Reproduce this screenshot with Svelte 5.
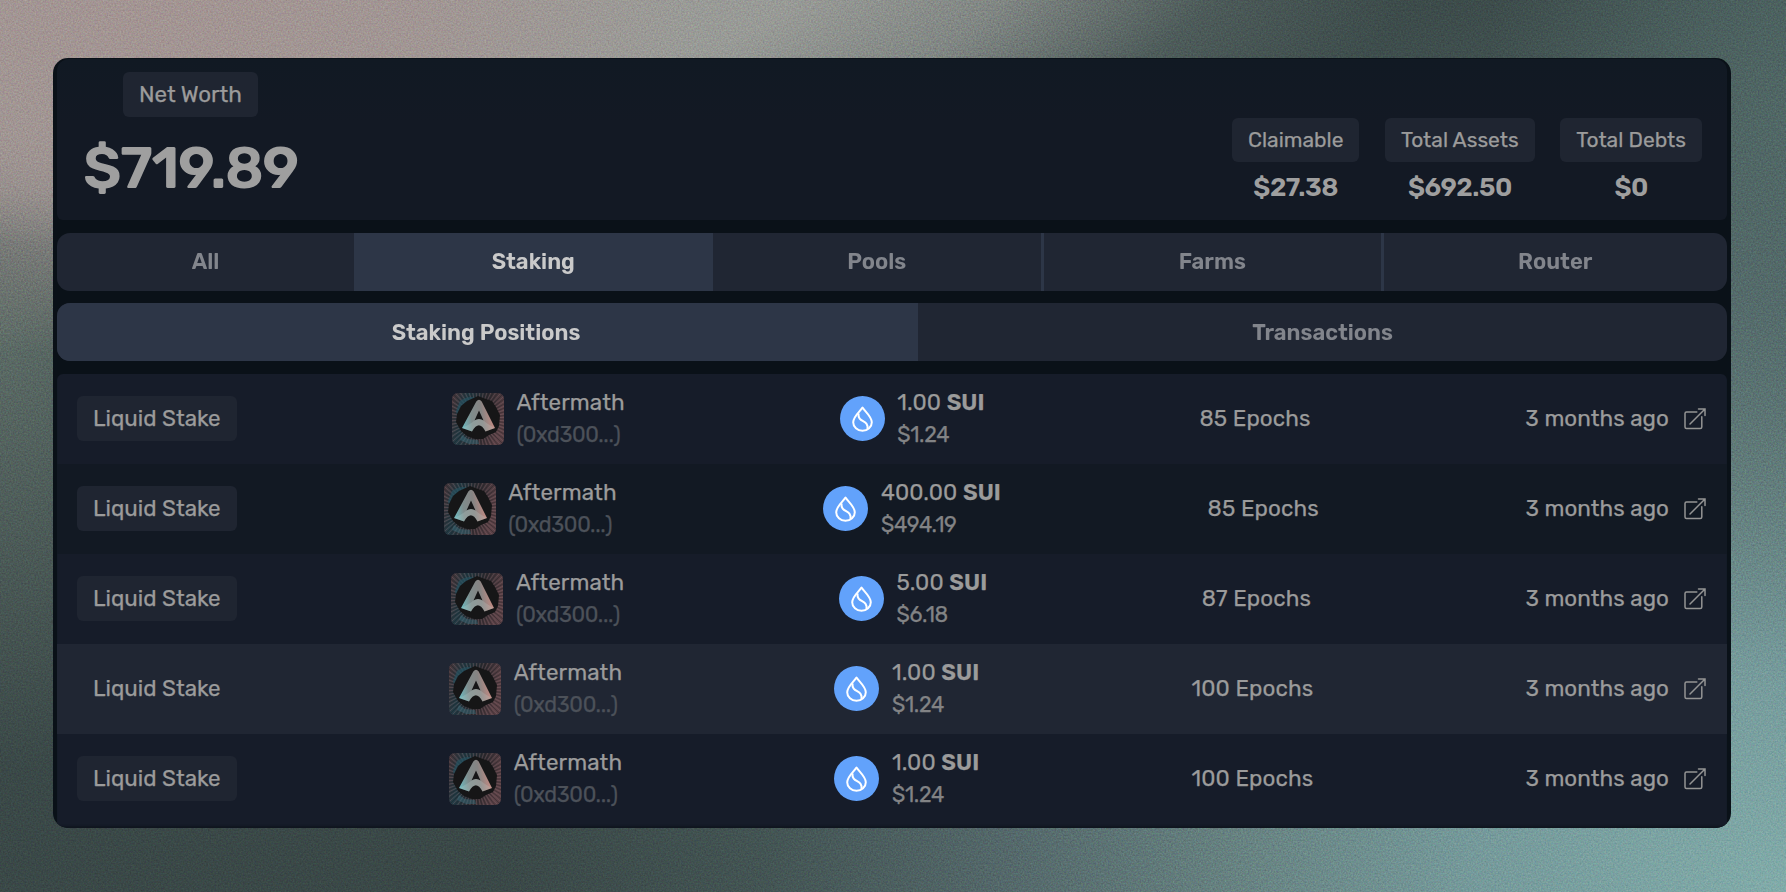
<script>
  const tabs = [
    { label: 'All' },
    { label: 'Staking', active: true },
    { label: 'Pools', line: true },
    { label: 'Farms', line: true },
    { label: 'Router' }
  ];
  const subtabs = [
    { label: 'Staking Positions', active: true },
    { label: 'Transactions' }
  ];
  const totals = [
    { label: 'Claimable', value: '$27.38' },
    { label: 'Total Assets', value: '$692.50' },
    { label: 'Total Debts', value: '$0' }
  ];
  const rows = [
    { amount: '1.00', usd: '$1.24', epochs: 85 },
    { amount: '400.00', usd: '$494.19', epochs: 85 },
    { amount: '5.00', usd: '$6.18', epochs: 87 },
    { amount: '1.00', usd: '$1.24', epochs: 100, hover: true },
    { amount: '1.00', usd: '$1.24', epochs: 100 }
  ];
  const rays = Array.from({ length: 96 }, (_, i) => {
    const a = (i * Math.PI) / 48;
    return { x: 26 + Math.cos(a) * 40, y: 26 + Math.sin(a) * 40 };
  });
</script>

<svg class="defs" width="0" height="0" aria-hidden="true">
  <defs>
    <linearGradient id="mark" gradientUnits="userSpaceOnUse" x1="12" y1="38" x2="42" y2="34">
      <stop offset="0" stop-color="#6fb4b9" />
      <stop offset="0.3" stop-color="#7f8c8c" />
      <stop offset="0.65" stop-color="#868483" />
      <stop offset="1" stop-color="#c08a82" />
    </linearGradient>
    <linearGradient id="tile" x1="0" y1="0" x2="1" y2="0.25">
      <stop offset="0" stop-color="#4a3539" />
      <stop offset="0.3" stop-color="#213c46" />
      <stop offset="0.65" stop-color="#2d2b30" />
      <stop offset="1" stop-color="#5a4146" />
    </linearGradient>
  </defs>
</svg>

<main>
  <svg class="grain" aria-hidden="true">
    <filter id="noise" color-interpolation-filters="sRGB">
      <feTurbulence type="fractalNoise" baseFrequency="0.6" numOctaves="2" seed="4" />
      <feColorMatrix type="saturate" values="0.6" />
      <feComponentTransfer>
        <feFuncR type="linear" slope="1.6" intercept="-0.3" />
        <feFuncG type="linear" slope="1.6" intercept="-0.3" />
        <feFuncB type="linear" slope="1.6" intercept="-0.3" />
        <feFuncA type="linear" slope="0" intercept="1" />
      </feComponentTransfer>
    </filter>
    <rect width="100%" height="100%" filter="url(#noise)" />
  </svg>

  <section class="panel">
    <header>
      <div class="worth">
        <span class="pill">Net Worth</span>
        <strong>$719.89</strong>
      </div>
      <div class="totals">
        {#each totals as t}
          <div class="total">
            <span class="pill">{t.label}</span>
            <b>{t.value}</b>
          </div>
        {/each}
      </div>
    </header>

    <nav class="tabs main-tabs">
      {#each tabs as t}
        <button class:active={t.active} class:line={t.line}>{t.label}</button>
      {/each}
    </nav>

    <nav class="tabs sub-tabs">
      {#each subtabs as t}
        <button class:active={t.active}>{t.label}</button>
      {/each}
    </nav>

    <div class="table">
      {#each rows as r}
        <div class="row" class:hover={r.hover}>
          <span class="pill">Liquid Stake</span>
          <div class="cell">
            <svg class="avatar" viewBox="0 0 52 52">
              <rect width="52" height="52" fill="url(#tile)" />
              <g stroke-width="0.6" opacity="0.6">
                {#each rays as p, i}
                  <line x1="26" y1="26" x2={p.x} y2={p.y} stroke={i % 2 ? '#8d6c70' : '#1b1b1f'} />
                {/each}
              </g>
              <path d="M8 8Q17 2 24 5L14 11L6 25L4 18Z" fill="#25515f" opacity="0.7" />
              <path d="M10 42L16 46L26 47L27 51L17 51L8 47Z" fill="#3b7482" opacity="0.45" />
              <path d="M26 3L34 6L40 8L44 14L48 22L47 33L44 39L37 42L31 46L23 46L15 43L9 38L4 29L5 21L9 13L15 8Z" fill="#161617" />
              <path d="M24.300 8.500Q27 5 29.700 8.500L43 35L33.500 38.500Q27 26 20 38.500L10 35ZM27 17.500L22.500 27.500Q27 24.500 31.500 27.500Z" fill="url(#mark)" fill-rule="evenodd" />
              <path d="M10 35Q19 31 23 27Q27 25 31 27Q35 31 43 35L33.500 38.500Q27 26 20 38.500Z" fill="#c3dad6" opacity="0.22" />
            </svg>
            <div class="lines">
              <span class="name">Aftermath</span>
              <span class="addr">(0xd300...)</span>
            </div>
          </div>
          <div class="cell">
            <svg class="coin" viewBox="0 0 45 45">
              <circle cx="22.500" cy="22.500" r="22.500" fill="#62a2fb" />
              <g fill="none" stroke="#fff" stroke-width="2" stroke-linejoin="round">
                <path d="M22.500 11.500C20 15.500 13.200 20.500 13.200 26.200A9.300 8.600 0 0 0 31.800 26.200C31.800 20.500 25 15.500 22.500 11.500Z" />
                <path d="M18.500 17.500C17.500 27 29 23.500 27.500 33" />
              </g>
            </svg>
            <div class="lines">
              <span class="amount">{r.amount} <b>SUI</b></span>
              <span class="usd">{r.usd}</span>
            </div>
          </div>
          <span class="epochs">{r.epochs} Epochs</span>
          <div class="ago">
            <span>3 months ago</span>
            <svg width="22" height="22" viewBox="0 0 22 22" fill="none" stroke="#949494" stroke-width="1.500">
              <path d="M12.800 4H2.500A1.500 1.500 0 0 0 1 5.500V19A1.500 1.500 0 0 0 2.500 20.500H16.300A1.500 1.500 0 0 0 17.800 19V8.800" stroke-linecap="round" />
              <path d="M6 16L21 1M14.500 1H21V7.500" stroke-linecap="round" />
            </svg>
          </div>
        </div>
      {/each}
    </div>
  </section>
</main>

<style>
  :global(body) { margin: 0; overflow: hidden; }
  .defs { position: absolute; }
  main {
    position: relative;
    box-sizing: border-box;
    width: 1786px;
    height: 892px;
    padding: 58px 55px 64px 53px;
    font-family: Rubik, Roboto, sans-serif;
    font-size: 22.4px;
    font-weight: 400;
    color: #9b9b9b;
    background:
      radial-gradient(ellipse 560px 360px at 140px 0, rgba(163, 148, 146, 0.95) 0%, rgba(163, 148, 146, 0.75) 50%, rgba(163, 148, 146, 0) 100%),
      radial-gradient(ellipse 1340px 370px at 150px -50px, #a09d9a 0%, #989a96 50%, rgba(134, 139, 136, 0.92) 65%, rgba(90, 104, 102, 0.6) 80%, rgba(60, 76, 74, 0) 95%),
      radial-gradient(ellipse 300px 560px at 100% 130px, rgba(84, 108, 106, 0.8) 0%, rgba(84, 108, 106, 0) 100%),
      radial-gradient(ellipse 1280px 980px at 100% 100%, #81aba9 0%, #75999a 25%, #678281 43%, #54686a 61%, #435453 80%, rgba(59, 73, 72, 0) 100%),
      radial-gradient(ellipse 300px 440px at 0 330px, #5c6b66 0%, rgba(59, 73, 72, 0) 100%),
      #3a4847;
  }
  .grain {
    position: absolute;
    inset: 0;
    width: 100%;
    height: 100%;
    opacity: 0.17;
    mix-blend-mode: overlay;
  }
  .panel {
    position: relative;
    box-sizing: border-box;
    height: 770px;
    display: flex;
    flex-direction: column;
    gap: 12.5px;
    padding: 1px 4px 0 4px;
    border-radius: 15px;
    overflow: hidden;
    background: #0a1118;
  }
  header {
    box-sizing: border-box;
    height: 161px;
    flex: none;
    display: flex;
    justify-content: space-between;
    padding: 13px 25px 0 26px;
    background: linear-gradient(#111923, #131924 40%);
    border-radius: 12px 12px 6px 6px;
  }
  .pill {
    display: inline-flex;
    align-items: center;
    height: 45px;
    box-sizing: border-box;
    padding: 0 16.3px;
    border-radius: 6px;
    background: #1f2531;
    white-space: nowrap;
  }
  .pill, .name, .addr, .amount, .usd, .epochs, .ago span { -webkit-text-stroke: 0.25px currentColor; }
  .worth { display: flex; flex-direction: column; align-items: center; }
  .worth strong { font-size: 59px; font-weight: 600; line-height: 70px; margin-top: 15.5px; color: #9f9f9f; letter-spacing: -1.6px; }
  .totals { display: flex; gap: 25.6px; padding-top: 46px; }
  .total { display: flex; flex-direction: column; align-items: center; }
  .total .pill { height: 44px; font-size: 21px; padding: 0 16px 1px; }
  .total b { font-size: 26px; font-weight: 600; line-height: 32px; margin-top: 10px; color: #9f9f9f; letter-spacing: -0.5px; }
  .tabs { display: grid; height: 58px; flex: none; border-radius: 13px; overflow: hidden; background: #202633; }
  .main-tabs { grid-template-columns: 297fr 358.5fr 331.5fr 339.5fr 343.5fr; }
  .sub-tabs { grid-template-columns: 861fr 809fr; }
  .sub-tabs .active { padding-right: 3px; }
  .tabs button {
    border: 0;
    padding: 0;
    background: none;
    font: 600 22px Rubik, Roboto, sans-serif;
    color: #82858c;
    box-sizing: border-box;
  }
  .tabs .active { background: #2d3647; color: #cacaca; }
  .tabs .line { border-right: 3px solid #2d3647; }
  .table { flex: 1; background: #161c29; border-radius: 6px 6px 0 0; box-shadow: inset 0 -3px 2px -1px #10161f; }
  .row {
    box-sizing: border-box;
    height: 90px;
    display: flex;
    align-items: center;
    justify-content: space-between;
    padding: 0 21px 0 19.6px;
  }
  .row:nth-child(even) { background: #121923; }
  .row.hover { background: #202633; }
  .row.hover .pill { background: none; }
  .cell { display: flex; align-items: center; gap: 12.7px; }
  .avatar { width: 52px; height: 52px; border-radius: 6px; }
  .coin { width: 45px; height: 45px; }
  .lines { display: flex; flex-direction: column; line-height: 32px; white-space: nowrap; }
  .name { letter-spacing: 0.1px; }
  .addr { color: #4c5159; font-size: 21.5px; letter-spacing: -0.35px; }
  .usd { color: #828385; font-size: 21.5px; letter-spacing: -0.35px; }
  .amount { letter-spacing: 0.1px; }
  .amount b { font-weight: 600; }
  .epochs { letter-spacing: 0.1px; }
  .ago { display: flex; align-items: center; gap: 15px; letter-spacing: 0.05px; }
</style>
